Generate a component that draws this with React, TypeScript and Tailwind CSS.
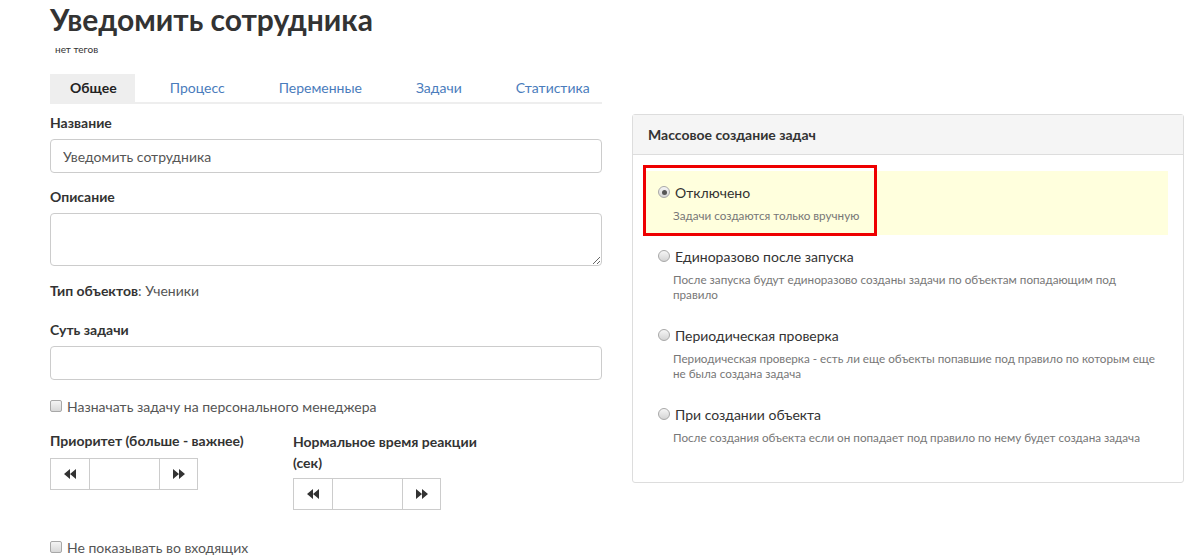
import React from "react"

const font = { fontFamily: "Lato, 'Liberation Sans', sans-serif" }

function Arrows({ dir }: { dir: "left" | "right" }) {
  return (
    <svg width="12" height="10" viewBox="0 0 12 10" className={dir === "right" ? "-scale-x-100" : ""}>
      <path d="M6 0 L0 5 L6 10 Z M12 0 L6 5 L12 10 Z" fill="#333" />
    </svg>
  )
}

function Stepper() {
  return (
    <div className="flex h-[32px] w-[148px] border border-[#ccc]">
      <div className="flex w-[38px] items-center justify-center">
        <Arrows dir="left" />
      </div>
      <div className="w-[71px] border-x border-[#ccc]" />
      <div className="flex flex-1 items-center justify-center">
        <Arrows dir="right" />
      </div>
    </div>
  )
}

function Checkbox({ label }: { label: string }) {
  return (
    <div className="flex h-5 items-center">
      <span className="mr-[5px] h-[12px] w-[12px] rounded-[2px] border border-[#a8a8a8] bg-gradient-to-b from-[#f4f4f4] to-[#d8d8d8]" />
      <span className="text-[14px] text-[#555]">{label}</span>
    </div>
  )
}

function Radio({ checked }: { checked?: boolean }) {
  return (
    <span className="flex h-[12px] w-[12px] items-center justify-center rounded-full border border-[#a8a8a8] bg-gradient-to-b from-[#f6f6f6] to-[#d4d4d4]">
      {checked && <span className="h-[5px] w-[5px] rounded-full bg-[#555]" />}
    </span>
  )
}

const options = [
  { title: "Отключено", desc: ["Задачи создаются только вручную"], checked: true },
  {
    title: "Единоразово после запуска",
    desc: ["После запуска будут единоразово созданы задачи по объектам попадающим под", "правило"],
  },
  {
    title: "Периодическая проверка",
    desc: ["Периодическая проверка - есть ли еще объекты попавшие под правило по которым еще", "не была создана задача"],
  },
  { title: "При создании объекта", desc: ["После создания объекта если он попадает под правило по нему будет создана задача"] },
]

const tabs = ["Общее", "Процесс", "Переменные", "Задачи", "Статистика"]

export default function App() {
  return (
    <div className="min-h-[559px] w-[1200px] bg-white pl-[50px] text-[#333]" style={font}>
      {/* Header */}
      <h1 className="h-[38px] text-[30px] font-bold leading-[38px] text-[#333]">Уведомить сотрудника</h1>
      <div className="ml-[5px] mt-[4px] text-[10px] leading-[14px] text-[#333]">нет тегов</div>

      <div className="mt-[18px] flex gap-[30px]">
        {/* Left column */}
        <div className="w-[552px]">
          <div className="flex border-b-2 border-[#eee]">
            {tabs.map((t, i) => (
              <div
                key={t}
                className={
                  i === 0
                    ? "mr-[15px] flex h-[28px] items-center bg-[#eee] pb-[2px] pl-[20px] pr-[18px] text-[14px] font-bold text-[#222]"
                    : "mr-[15px] flex h-[28px] items-center pb-[2px] pl-[20px] pr-[19px] text-[14px] text-[#4a7cbc]"
                }
              >
                {t}
              </div>
            ))}
          </div>

          <div className="mt-[9px] text-[14px] font-bold leading-5">Название</div>
          <input
            readOnly
            defaultValue="Уведомить сотрудника"
            className="mt-[6px] block h-[34px] w-full rounded-[4px] border border-[#ccc] px-[12px] text-[14px] text-[#555] outline-none"
            style={font}
          />

          <div className="mt-[14px] text-[14px] font-bold leading-5">Описание</div>
          <textarea
            readOnly
            className="mt-[6px] block h-[53px] w-full rounded-[4px] border border-[#ccc] px-[12px] text-[14px] outline-none"
            style={font}
          />

          <div className="mt-[15px] text-[14px] leading-5">
            <span className="font-bold">Тип объектов</span>
            <span className="text-[#555]">: Ученики</span>
          </div>

          <div className="mt-[19px] text-[14px] font-bold leading-5">Суть задачи</div>
          <div className="mt-[6px] h-[34px] w-full rounded-[4px] border border-[#ccc]" />

          <div className="mt-[16px]">
            <Checkbox label="Назначать задачу на персонального менеджера" />
          </div>

          <div className="mt-[15px] flex">
            <div className="w-[243px]">
              <div className="text-[14px] font-bold leading-5">Приоритет (больше - важнее)</div>
              <div className="mt-[7px]">
                <Stepper />
              </div>
            </div>
            <div className="w-[200px]">
              <div className="text-[14px] font-bold leading-[21px]">Нормальное время реакции (сек)</div>
              <div className="mt-[5px]">
                <Stepper />
              </div>
            </div>
          </div>

          <div className="mt-[27px]">
            <Checkbox label="Не показывать во входящих" />
          </div>
        </div>

        {/* Right panel */}
        <div className="mt-[40px] h-[369px] w-[552px] rounded-[3px] border border-[#ddd]">
          <div className="flex h-[40px] items-center border-b border-[#ddd] bg-[#f5f5f5] px-[15px] text-[14px] font-bold">
            Массовое создание задач
          </div>
          <div className="pl-[10px] pr-[15px] pt-[16px]">
            {options.map((o) => (
              <div key={o.title} className={o.checked ? "relative bg-[#ffffdd] pb-[11px] pl-[15px] pt-[11px]" : "relative pb-[11px] pl-[15px] pt-[11px]"}>
                <div className="flex h-5 items-center">
                  <Radio checked={o.checked} />
                  <span className="ml-[5px] text-[14px] text-[#333]">{o.title}</span>
                </div>
                <div className="ml-[15px] mt-[6px] pb-[1px] text-[11.7px] leading-[15px] text-[#777]">
                  {o.desc.map((d) => (
                    <div key={d} className="whitespace-nowrap">{d}</div>
                  ))}
                </div>
                {o.checked && (
                  <div className="absolute -top-[6px] left-0 h-[71px] w-[234px] border-[3px] border-[#ee0000]" />
                )}
              </div>
            ))}
          </div>
        </div>
      </div>
    </div>
  )
}
